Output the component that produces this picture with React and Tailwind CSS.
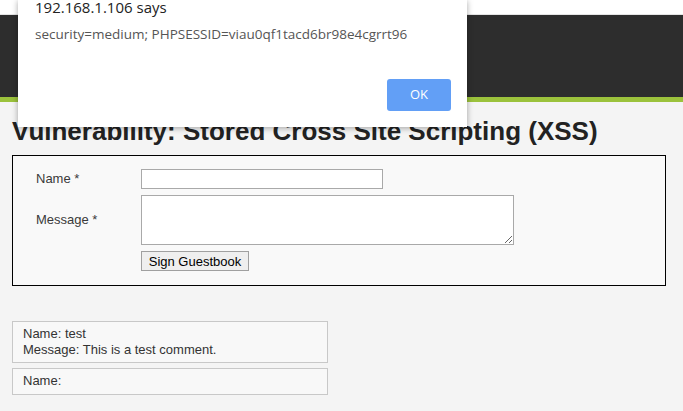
export default function App() {
  return (
    <div className="relative h-[411px] w-[683px] overflow-hidden bg-[#f4f4f4] font-['Liberation_Sans',Arial,sans-serif] text-[13px] text-[#222]">
      {/* header */}
      <div className="h-[15px] border-b border-[#e4e4e4] bg-white" />
      <div className="h-[82px] bg-[#2d2d2d]" />
      <div className="h-[5px] bg-[#9bc23c]" />

      <div className="px-[12px]">
        <h1 className="mt-[14px] text-[26px] font-bold leading-[30px] text-[#222]">
          Vulnerability: Stored Cross Site Scripting (XSS)
        </h1>

        <div className="mt-[9px] h-[131px] w-[654px] border border-black bg-[#f9f9f9] pl-[23px] pt-[13px]">
          <div className="flex items-center">
            <label className="w-[105px] text-[#3a3a3a]">Name *</label>
            <input className="h-[20px] w-[242px] border border-[#a9a9a9] bg-white" />
          </div>
          <div className="mt-[6px] flex items-center">
            <label className="w-[105px] text-[#3a3a3a]">Message *</label>
            <textarea className="h-[50px] w-[373px] border border-[#a9a9a9] bg-white" />
          </div>
          <div className="mt-[6px] flex">
            <div className="w-[105px]" />
            <button className="h-[20px] w-[108px] border border-[#a0a0a0] bg-[#efefef] text-[13px] leading-none text-black">
              Sign Guestbook
            </button>
          </div>
        </div>

        <div className="mt-[35px] w-[316px] border border-[#c8c8c8] bg-[#f8f8f8] px-[10px] pb-[4px] pt-[4px] text-[13px] leading-[16px] text-[#333]">
          Name: test
          <br />
          Message: This is a test comment.
        </div>
        <div className="mt-[5px] w-[316px] border border-[#c8c8c8] bg-[#f8f8f8] px-[10px] pb-[5px] pt-[4px] text-[13px] leading-[16px] text-[#333]">
          Name:
        </div>
      </div>

      {/* alert dialog */}
      <div className="absolute left-[18px] top-0 h-[127px] w-[449px] bg-white shadow-[0_1px_6px_rgba(0,0,0,0.35)] font-['Open_Sans',sans-serif]">
        <div className="absolute left-[17px] top-[-3px] text-[15px] leading-[20px] text-[#222]">192.168.1.106 says</div>
        <div className="absolute left-[17px] top-[25px] text-[13.5px] leading-[18px] text-[#555]">
          security=medium; PHPSESSID=viau0qf1tacd6br98e4cgrrt96
        </div>
        <button className="absolute left-[369px] top-[79px] h-[32px] w-[64px] rounded-[3px] bg-[#629ff6] text-[13px] text-white">
          OK
        </button>
      </div>
    </div>
  )
}
